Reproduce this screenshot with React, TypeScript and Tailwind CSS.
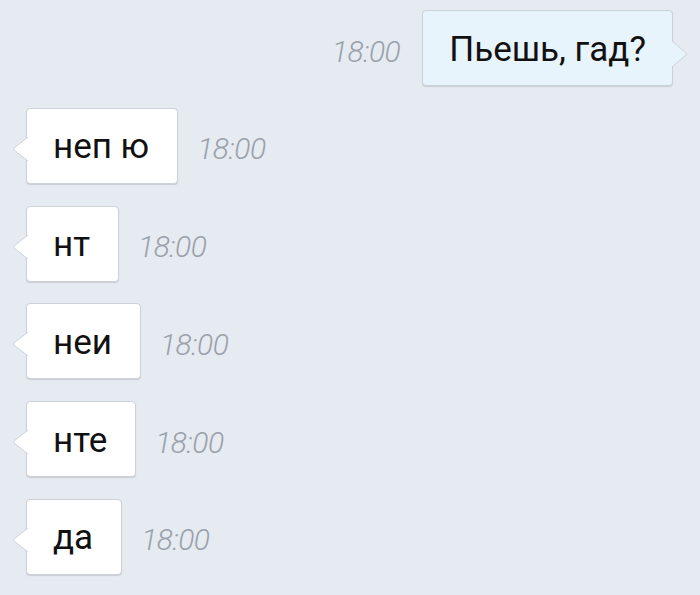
const incoming = ['неп ю', 'нт', 'неи', 'нте', 'да']

const Tail = ({ side, fill }: { side: 'left' | 'right'; fill: string }) => {
  if (side === 'left') {
    return (
      <svg
        className="absolute left-[-15px] top-[28px]"
        width="17"
        height="24"
        viewBox="0 0 17 24"
      >
        <path d="M17 0 L16 0 L2 11 Q1 12 2 13 L16 24 L17 24 Z" fill={fill} />
        <path d="M16 0 L2 11 Q1 12 2 13 L16 24" fill="none" stroke="#cdd2d9" strokeWidth="1" />
      </svg>
    )
  }
  return (
    <svg
      className="absolute right-[-16px] top-[30px]"
      width="17"
      height="26"
      viewBox="0 0 17 26"
    >
      <path d="M0 0 L1 0 L15 12 Q16 13 15 14 L1 26 L0 26 Z" fill={fill} />
      <path d="M1 0 L15 12 Q16 13 15 14 L1 26" fill="none" stroke="#cdd2d9" strokeWidth="1" />
    </svg>
  )
}

const Time = () => (
  <span className="font-['Roboto',sans-serif] text-[30px] font-light italic text-[#9aa1ab] tracking-[-0.5px] translate-y-[3px]">
    18:00
  </span>
)

export default function App() {
  return (
    <div className="w-[700px] h-[595px] overflow-hidden bg-[#e6eaf1] font-['Roboto',sans-serif] flex flex-col pt-[10px] gap-[21.75px]">
      <div className="flex items-center justify-end pr-[27px] gap-[22px]">
        <Time />
        <div className="relative h-[76px] flex items-center px-[26px] rounded-[4px] bg-[#e8f4fc] border border-[#cdd2d9] shadow-[0_1px_1px_rgba(0,0,0,0.12)]">
          <span className="text-[35px] text-[#111] leading-none translate-y-[1px]">Пьешь, гад?</span>
          <Tail side="right" fill="#e8f4fc" />
        </div>
      </div>
      {incoming.map((t) => (
        <div key={t} className="flex items-center pl-[26px] gap-[19px]">
          <div className="relative h-[76px] flex items-center pl-[26px] pr-[28px] rounded-[4px] bg-white border border-[#cdd2d9] shadow-[0_1px_1px_rgba(0,0,0,0.12)]">
            <span className="text-[35px] text-[#111] leading-none translate-y-[1px]">{t}</span>
            <Tail side="left" fill="#ffffff" />
          </div>
          <Time />
        </div>
      ))}
    </div>
  )
}
